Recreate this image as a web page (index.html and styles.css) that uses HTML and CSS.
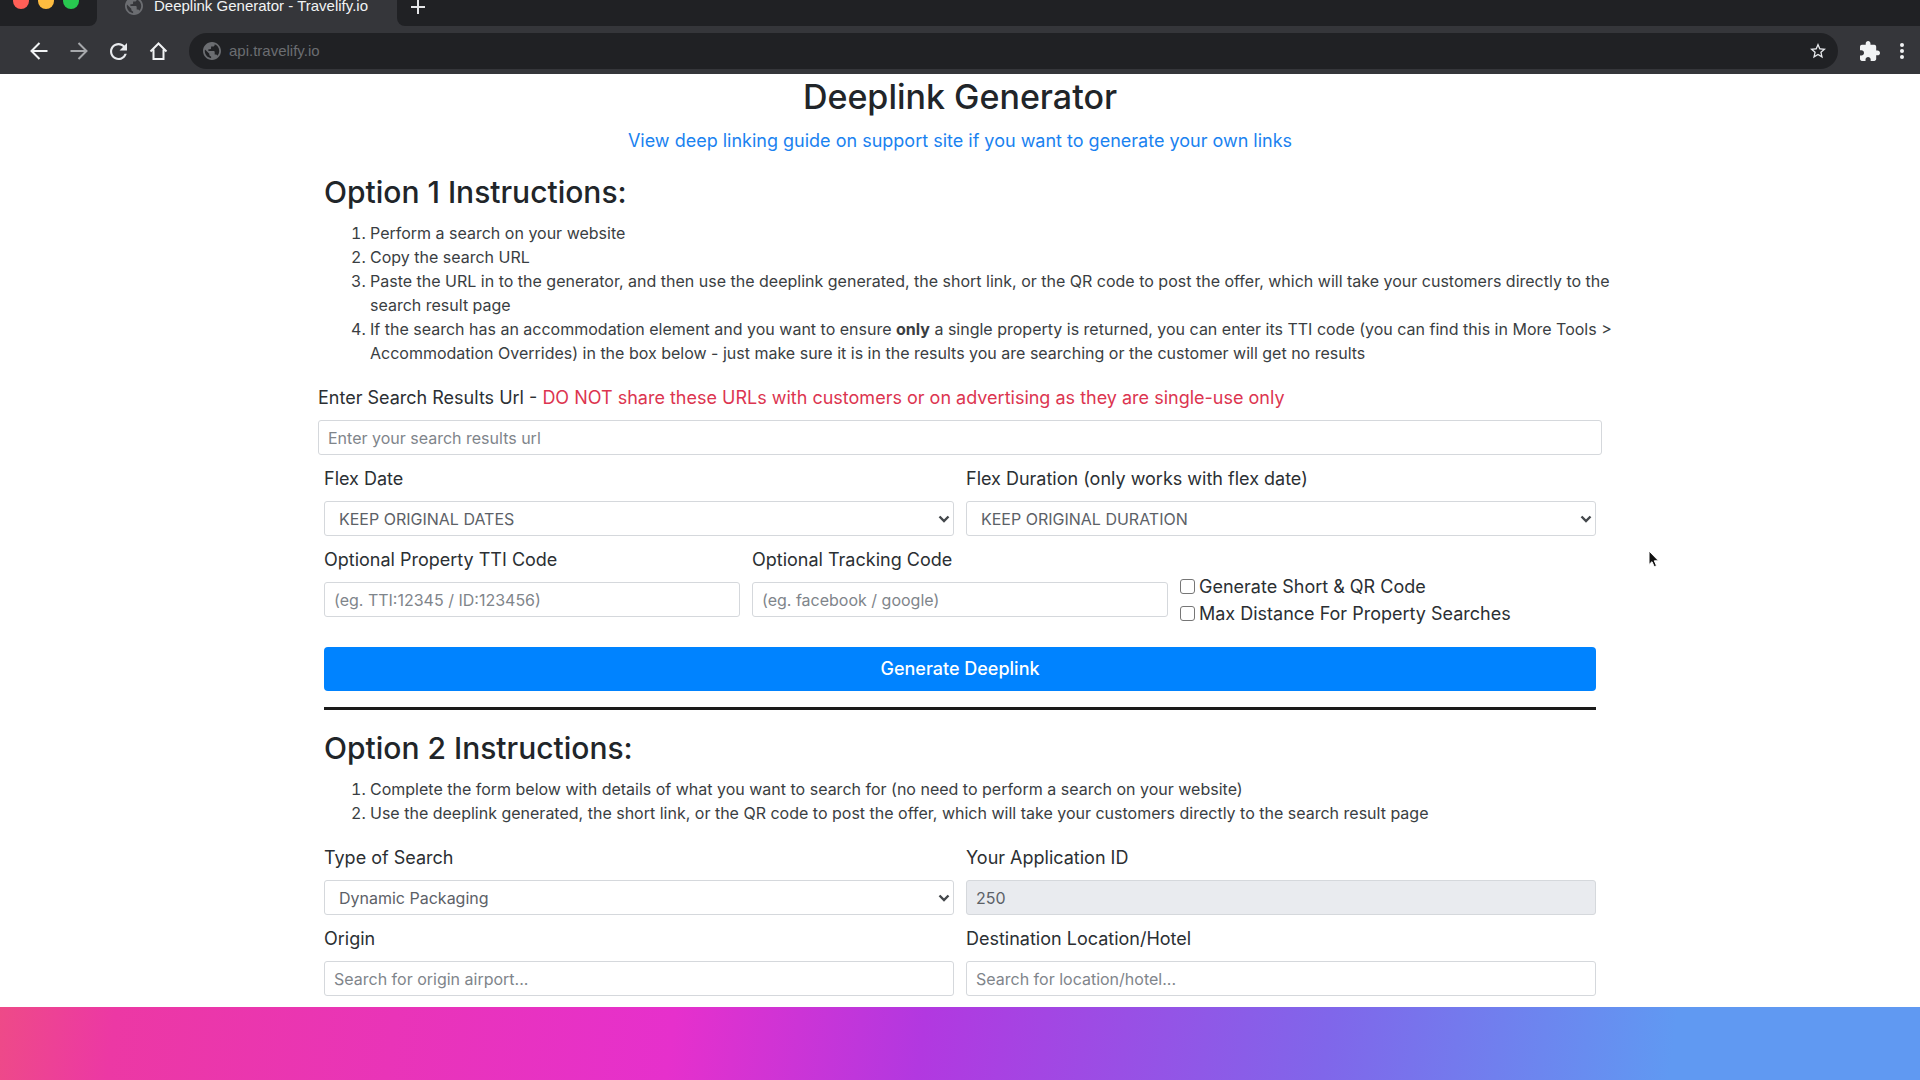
FILE: index.html
```html
<!DOCTYPE html>
<html lang="en">
<head>
<meta charset="utf-8">
<meta name="viewport" content="width=device-width, initial-scale=1">
<title>Deeplink Generator - Travelify.io</title>
<link rel="stylesheet" href="styles.css">
</head>
<body>
<svg class="symbols" aria-hidden="true">
  <symbol id="globe" viewBox="2 2 20 20"><path fill="currentColor" d="M12 2C6.48 2 2 6.48 2 12s4.48 10 10 10 10-4.48 10-10S17.520 2 12 2zm-1 17.930c-3.950-.49-7-3.850-7-7.930 0-.62.08-1.210.21-1.790L9 15v1c0 1.100.9 2 2 2v1.930zm6.900-2.540c-.26-.81-1-1.390-1.900-1.390h-1v-3c0-.55-.45-1-1-1H8v-2h2c.55 0 1-.45 1-1V7h2c1.100 0 2-.9 2-2v-.41c2.930 1.190 5 4.060 5 7.410 0 2.080-.8 3.970-2.100 5.390z"/></symbol>
  <symbol id="chevron" viewBox="0 0 12 8"><path fill="none" stroke="currentColor" stroke-width="2.400" d="M1.500 1.500 6 6l4.500-4.500"/></symbol>
</svg>

<header class="browser">
  <div class="tabs">
    <div class="lights"><span class="light red"></span><span class="light amber"></span><span class="light green"></span></div>
    <div class="tab"><svg class="globe"><use href="#globe"/></svg><span>Deeplink Generator - Travelify.io</span></div>
    <div class="strip">
      <button class="icon" aria-label="New tab"><svg width="14" height="14" viewBox="0 0 14 14"><path d="M7 0v14M0 7h14" stroke="#e4e5e7" stroke-width="2"/></svg></button>
    </div>
  </div>
  <div class="toolbar">
    <nav class="nav">
      <button class="icon" aria-label="Back"><svg width="18" height="18" viewBox="0 0 18 18" fill="none" stroke="#f1f3f4" stroke-width="2"><path d="M17.500 9H2M9.500 1 1.500 9l8 8"/></svg></button>
      <button class="icon" aria-label="Forward"><svg width="18" height="18" viewBox="0 0 18 18" fill="none" stroke="#a6a8ab" stroke-width="2"><path d="M.5 9H16M8.500 1l8 8-8 8"/></svg></button>
      <button class="icon" aria-label="Reload"><svg width="17" height="17" viewBox="4 4 16 16"><path fill="#e8eaed" d="M17.650 6.350C16.200 4.900 14.210 4 12 4c-4.420 0-7.990 3.580-7.990 8s3.570 8 7.990 8c3.730 0 6.840-2.550 7.730-6h-2.080c-.82 2.330-3.040 4-5.650 4-3.310 0-6-2.690-6-6s2.690-6 6-6c1.660 0 3.140.69 4.220 1.780L13 11h7V4l-2.350 2.350z"/></svg></button>
      <button class="icon" aria-label="Home"><svg width="19" height="18" viewBox="0 0 18 18" fill="none" stroke="#f1f3f4" stroke-width="2"><path d="M1 9.500 9 1.500l8 8M4 7.500V17h10V7.500"/></svg></button>
    </nav>
    <div class="omnibox">
      <svg class="globe"><use href="#globe"/></svg>
      <input class="address" type="text" aria-label="Address" value="api.travelify.io">
      <button class="icon" aria-label="Bookmark"><svg width="16" height="16" viewBox="2 2 20 20"><path fill="#e8eaed" d="M22 9.240l-7.190-.62L12 2 9.190 8.630 2 9.240l5.460 4.730L5.820 21 12 17.270 18.180 21l-1.630-7.030L22 9.240zM12 15.400l-3.760 2.270 1-4.280-3.320-2.880 4.380-.38L12 6.100l1.710 4.040 4.380.38-3.320 2.880 1 4.280L12 15.400z"/></svg></button>
    </div>
    <button class="icon" aria-label="Extensions"><svg width="20" height="20" viewBox="2 1 21 21"><path fill="#f1f3f4" d="M20.500 11H19V7c0-1.100-.9-2-2-2h-4V3.500C13 2.120 11.880 1 10.500 1S8 2.120 8 3.500V5H4c-1.100 0-1.990.9-1.990 2v3.800H3.500c1.490 0 2.700 1.210 2.700 2.700s-1.210 2.700-2.700 2.700H2V20c0 1.100.9 2 2 2h3.800v-1.500c0-1.490 1.210-2.700 2.700-2.700 1.490 0 2.700 1.210 2.700 2.700V22H17c1.100 0 2-.9 2-2v-4h1.500c1.380 0 2.500-1.120 2.500-2.500S21.880 11 20.500 11z"/></svg></button>
    <button class="icon" aria-label="Menu"><svg width="4" height="18" viewBox="0 0 4 18" fill="#f1f3f4"><circle cx="2" cy="3" r="2"/><circle cx="2" cy="9" r="2"/><circle cx="2" cy="15" r="2"/></svg></button>
  </div>
</header>

<main class="page">
  <h1 class="title">Deeplink Generator</h1>
  <p class="guide"><a href="#guide">View deep linking guide on support site if you want to generate your own links</a></p>

  <form class="option">
    <h2 class="heading">Option 1 Instructions:</h2>
    <ol class="steps">
      <li>Perform a search on your website</li>
      <li>Copy the search URL</li>
      <li>Paste the URL in to the generator, and then use the deeplink generated, the short link, or the QR code to post the offer, which will take your customers directly to the search result page</li>
      <li>If the search has an accommodation element and you want to ensure <strong>only</strong> a single property is returned, you can enter its TTI code (you can find this in More Tools &gt; Accommodation Overrides) in the box below - just make sure it is in the results you are searching or the customer will get no results</li>
    </ol>
    <div class="field wide">
      <label for="url">Enter Search Results Url - <span class="warning">DO NOT share these URLs with customers or on advertising as they are single-use only</span></label>
      <input class="control" id="url" type="text" placeholder="Enter your search results url">
    </div>
    <div class="row halves">
      <div class="field">
        <label for="flex-date">Flex Date</label>
        <div class="select"><select class="control" id="flex-date"><option>KEEP ORIGINAL DATES</option></select><svg class="chevron"><use href="#chevron"/></svg></div>
      </div>
      <div class="field">
        <label for="flex-duration">Flex Duration (only works with flex date)</label>
        <div class="select"><select class="control" id="flex-duration"><option>KEEP ORIGINAL DURATION</option></select><svg class="chevron"><use href="#chevron"/></svg></div>
      </div>
    </div>
    <div class="row thirds">
      <div class="field">
        <label for="tti">Optional Property TTI Code</label>
        <input class="control" id="tti" type="text" placeholder="(eg. TTI:12345 / ID:123456)">
      </div>
      <div class="field">
        <label for="tracking">Optional Tracking Code</label>
        <input class="control" id="tracking" type="text" placeholder="(eg. facebook / google)">
      </div>
      <div class="checks">
        <div class="check"><input type="checkbox" id="short"><label for="short">Generate Short &amp; QR Code</label></div>
        <div class="check"><input type="checkbox" id="distance"><label for="distance">Max Distance For Property Searches</label></div>
      </div>
    </div>
    <button class="submit" type="button">Generate Deeplink</button>
  </form>

  <hr class="rule">

  <form class="option">
    <h2 class="heading">Option 2 Instructions:</h2>
    <ol class="steps">
      <li>Complete the form below with details of what you want to search for (no need to perform a search on your website)</li>
      <li>Use the deeplink generated, the short link, or the QR code to post the offer, which will take your customers directly to the search result page</li>
    </ol>
    <div class="row halves">
      <div class="field">
        <label for="type">Type of Search</label>
        <div class="select"><select class="control" id="type"><option>Dynamic Packaging</option></select><svg class="chevron"><use href="#chevron"/></svg></div>
      </div>
      <div class="field">
        <label for="app-id">Your Application ID</label>
        <input class="control" id="app-id" type="text" value="250" readonly>
      </div>
    </div>
    <div class="row halves">
      <div class="field">
        <label for="origin">Origin</label>
        <input class="control" id="origin" type="text" placeholder="Search for origin airport...">
      </div>
      <div class="field">
        <label for="destination">Destination Location/Hotel</label>
        <input class="control" id="destination" type="text" placeholder="Search for location/hotel...">
      </div>
    </div>
  </form>
</main>

<footer class="band"></footer>

<svg class="pointer" width="12" height="18" viewBox="0 0 12 18"><path fill="#111" stroke="#fff" stroke-width="1" d="M1 1v13.500l3-2.800 2.200 5 2.300-1-2.200-4.900h4.200z"/></svg>
</body>
</html>
```
FILE: styles.css
```css
* { box-sizing: border-box; }

body {
  margin: 0;
  min-height: 100vh;
  display: flex;
  flex-direction: column;
  position: relative;
  background: #fff;
  color: #2b2f33;
  font: 18px/26px Inter, "Liberation Sans", sans-serif;
}

.symbols { position: absolute; width: 0; height: 0; }

/* Browser chrome */
.browser {
  background: #35363a;
  font-family: "Liberation Sans", Arial, sans-serif;
}
.tabs { display: flex; height: 26px; overflow: hidden; }
.lights {
  display: flex;
  gap: 9px;
  width: 97px;
  height: 26px;
  padding-left: 13px;
  background: #202124;
  border-bottom-right-radius: 8px;
}
.light { width: 16px; height: 16px; margin-top: -7px; border-radius: 50%; }
.red { background: #ff5f57; }
.amber { background: #febc40; }
.green { background: #28c850; }
.tab {
  display: flex;
  align-items: center;
  gap: 11px;
  width: 300px;
  height: 12px;
  padding-left: 28px;
  color: #f1f3f4;
  font-size: 15px;
  line-height: 18px;
}
.globe { width: 18px; height: 18px; flex: none; color: #6b6d71; }
.strip {
  flex: 1;
  padding-left: 14px;
  background: #202124;
  border-bottom-left-radius: 8px;
}
.strip .icon { height: 13px; }
.icon {
  display: flex;
  align-items: center;
  padding: 0;
  border: 0;
  background: none;
}
.icon svg { display: block; }
.toolbar {
  display: flex;
  align-items: center;
  height: 48px;
  padding: 2px 16px 0 30px;
}
.nav { display: flex; gap: 22px; margin-right: 21px; }
.omnibox {
  flex: 1;
  display: flex;
  align-items: center;
  gap: 8px;
  height: 36px;
  margin-right: 22px;
  padding: 0 12px 0 14px;
  border-radius: 18px;
  background: #202124;
}
.address {
  flex: 1;
  padding: 0;
  border: 0;
  outline: 0;
  background: none;
  color: #6b6d71;
  font: 15px/18px "Liberation Sans", Arial, sans-serif;
}
.toolbar > .icon + .icon { margin-left: 20px; }

/* Page content */
.page {
  flex: 1;
  width: 100%;
  max-width: 1284px;
  margin: 0 auto;
  padding: 0 6px;
}
.title {
  margin: 0;
  color: #212529;
  font-size: 34px;
  font-weight: 500;
  line-height: 46px;
  text-align: center;
}
.guide { margin: 8px 0 0; text-align: center; }
.guide a { color: #1a82f0; text-decoration: none; }
.heading {
  margin: 0;
  padding-top: 17px;
  color: #212529;
  font-size: 30px;
  font-weight: 500;
  line-height: 42px;
}
/* Long steps may run slightly past the form's right edge */
.steps {
  margin: 8px -24px 20px 0;
  padding-left: 46px;
  font-size: 16px;
  line-height: 24px;
  color: #3a3e42;
}
.row { display: grid; gap: 12px; }
.halves { grid-template-columns: repeat(2, 1fr); }
.thirds { grid-template-columns: repeat(3, 1fr); }
.field { display: flex; flex-direction: column; gap: 9px; margin-bottom: 11px; }
.wide { margin-left: -6px; margin-right: -6px; }
.warning { color: #dc3550; }
.control {
  width: 100%;
  height: 35px;
  padding: 0 9px;
  border: 1px solid #d5d8dc;
  border-radius: 3px;
  background: #fff;
  color: #5c6167;
  font: 16px/24px Inter, "Liberation Sans", sans-serif;
}
.control::placeholder { color: #7f858b; opacity: 1; }
.control[readonly] { background: #e9ebef; }
.select { display: grid; align-items: center; }
.select .control { grid-area: 1 / 1; padding: 0 14px; appearance: none; }
.chevron {
  grid-area: 1 / 1;
  justify-self: end;
  width: 12px;
  height: 8px;
  margin-right: 4px;
  color: #44484c;
  pointer-events: none;
}
.checks { padding-top: 26px; }
.check { display: flex; align-items: center; gap: 4px; height: 27px; }
.check input {
  appearance: none;
  width: 15px;
  height: 15px;
  margin: 0;
  border: 1px solid #767676;
  border-radius: 3px;
  background: #fff;
}
.submit {
  display: block;
  width: 100%;
  height: 44px;
  margin-top: 19px;
  border: 0;
  border-radius: 4px;
  background: #0083ff;
  color: #fff;
  font: 500 18px/26px Inter, "Liberation Sans", sans-serif;
}
.rule { margin: 16px 0 0; border: 0; border-top: 3px solid #1a1a1a; }

.band {
  flex: none;
  height: 73px;
  background: linear-gradient(97deg, #ee4a88 0%, #ec38a4 6%, #e630cc 35%, #b238e0 48%, #8066ea 69%, #6099f2 87%, #6099f2 100%);
}

.pointer { position: absolute; left: 1648px; top: 550px; }
```
